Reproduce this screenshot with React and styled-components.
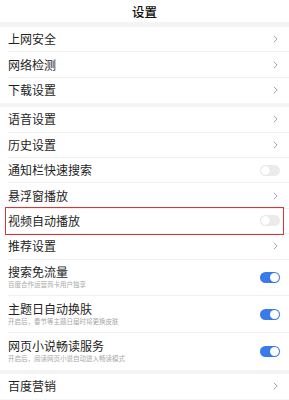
import React from "react";
import styled, { createGlobalStyle } from "styled-components";

const Global = createGlobalStyle`
  html, body {
    margin: 0;
    padding: 0;
    background: #fff;
  }
  body {
    font-family: "Noto Sans CJK SC", "Noto Sans", sans-serif;
    color: #222;
  }
`;

const groups = [
  [
    { label: "上网安全", kind: "arrow" },
    { label: "网络检测", kind: "arrow" },
    { label: "下载设置", kind: "arrow" },
  ],
  [
    { label: "语音设置", kind: "arrow" },
    { label: "历史设置", kind: "arrow" },
    { label: "通知栏快速搜索", kind: "off" },
    { label: "悬浮窗播放", kind: "arrow" },
    { label: "视频自动播放", kind: "off", marked: true },
    { label: "推荐设置", kind: "arrow" },
    { label: "搜索免流量", sub: "百度合作运营商卡用户独享", kind: "on" },
    { label: "主题日自动换肤", sub: "开启后，春节等主题日届时将更换皮肤", kind: "on" },
    { label: "网页小说畅读服务", sub: "开启后，阅读网页小说自动进入畅读模式", kind: "on" },
  ],
  [{ label: "百度营销", kind: "arrow" }],
];

export default function App() {
  return (
    <Page>
      <Global />
      <Header>设置</Header>
      {groups.map((g, gi) => (
        <Group key={gi}>
          {g.map((item) => (
            <Row key={item.label} tall={!!item.sub} marked={item.marked}>
              <Texts>
                <Label>{item.label}</Label>
                {item.sub && <Sub>{item.sub}</Sub>}
              </Texts>
              {item.kind === "arrow" ? (
                <Chevron viewBox="0 0 6 10">
                  <path d="M1 1l4 4-4 4" fill="none" stroke="#8a8a8a" strokeWidth="1" />
                </Chevron>
              ) : (
                <Toggle on={item.kind === "on"} />
              )}
            </Row>
          ))}
        </Group>
      ))}
    </Page>
  );
}

const Page = styled.div`
  width: 289px;
  height: 400px;
  overflow: hidden;
  background: #f4f4f4;
  display: flex;
  flex-direction: column;
  gap: 4px;
`;

const Header = styled.div`
  height: 22px;
  background: #fff;
  display: flex;
  align-items: center;
  justify-content: center;
  font-size: 12.5px;
  font-weight: 500;
  color: #111;
  margin-bottom: 1px;
`;

const Group = styled.div`
  background: #fff;
`;

const Row = styled.div`
  position: relative;
  height: ${(p) => (p.tall ? "36.7px" : "25.4px")};
  margin-left: 8px;
  padding-right: 9px;
  display: flex;
  align-items: center;
  justify-content: space-between;
  border-bottom: 1px solid #f0f0f0;
  box-sizing: border-box;
  &:last-child {
    border-bottom: none;
  }
  ${(p) =>
    p.marked &&
    `
    &::after {
      content: "";
      position: absolute;
      left: -3px;
      right: 5px;
      top: -2px;
      bottom: -2px;
      border: 1.5px solid #d8343c;
      pointer-events: none;
    }
  `}
`;

const Texts = styled.div`
  display: flex;
  flex-direction: column;
  gap: 1px;
`;

const Label = styled.div`
  font-size: 12px;
  line-height: 14px;
  color: #1e1e1e;
`;

const Sub = styled.div`
  font-size: 6.5px;
  line-height: 9px;
  color: #a8a8a8;
`;

const Chevron = styled.svg`
  width: 5px;
  height: 8px;
  margin-right: 2px;
`;

const Toggle = styled.div`
  position: relative;
  width: 20px;
  height: 11px;
  border-radius: 6px;
  background: ${(p) => (p.on ? "#3a7bea" : "#ebebeb")};
  &::after {
    content: "";
    position: absolute;
    top: 1px;
    ${(p) => (p.on ? "right: 1px;" : "left: 1px;")}
    width: 9px;
    height: 9px;
    border-radius: 50%;
    background: #fff;
    box-shadow: 0 0 1px rgba(0, 0, 0, 0.15);
  }
`;
